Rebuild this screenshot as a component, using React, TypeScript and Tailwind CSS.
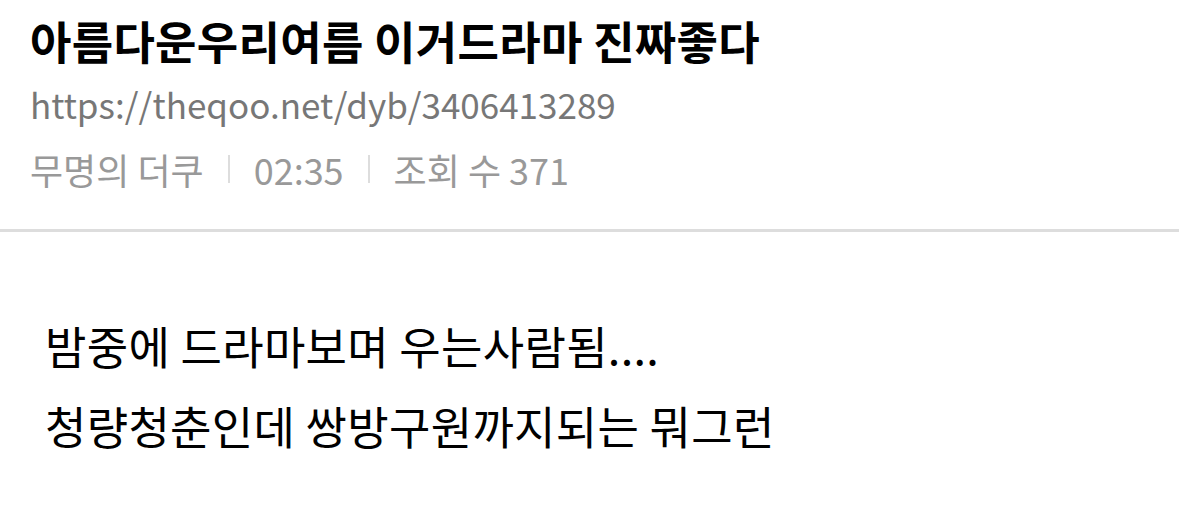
export default function App() {
  return (
    <div
      className="w-[1179px] h-[531px] bg-white overflow-hidden"
      style={{ fontFamily: '"Noto Sans CJK KR", "Noto Sans", sans-serif' }}
    >
      <div className="pl-[30px] pt-[11px]">
        <h1 className="text-[45px] font-bold text-black leading-[60px] tracking-[0.3px]">
          아름다운우리여름 이거드라마 진짜좋다
        </h1>
        <div className="text-[35px] text-[#777] leading-[50px] mt-[8px]">
          https://theqoo.net/dyb/3406413289
        </div>
        <div className="flex items-center text-[36px] text-[#999] leading-[50px] mt-[15px]">
          <span>무명의 더쿠</span>
          <span className="mx-[24px] w-[2px] h-[28px] bg-[#ddd]" />
          <span>02:35</span>
          <span className="mx-[24px] w-[2px] h-[28px] bg-[#ddd]" />
          <span>조회 수 371</span>
        </div>
      </div>
      <div className="mt-[35px] h-[3px] bg-[#dddddd]" />
      <div className="pl-[45px] pt-[74px] text-[45px] text-black leading-[80px] tracking-[0.3px]">
        <p>밤중에 드라마보며 우는사람됨....</p>
        <p>청량청춘인데 쌍방구원까지되는 뭐그런</p>
      </div>
    </div>
  )
}
